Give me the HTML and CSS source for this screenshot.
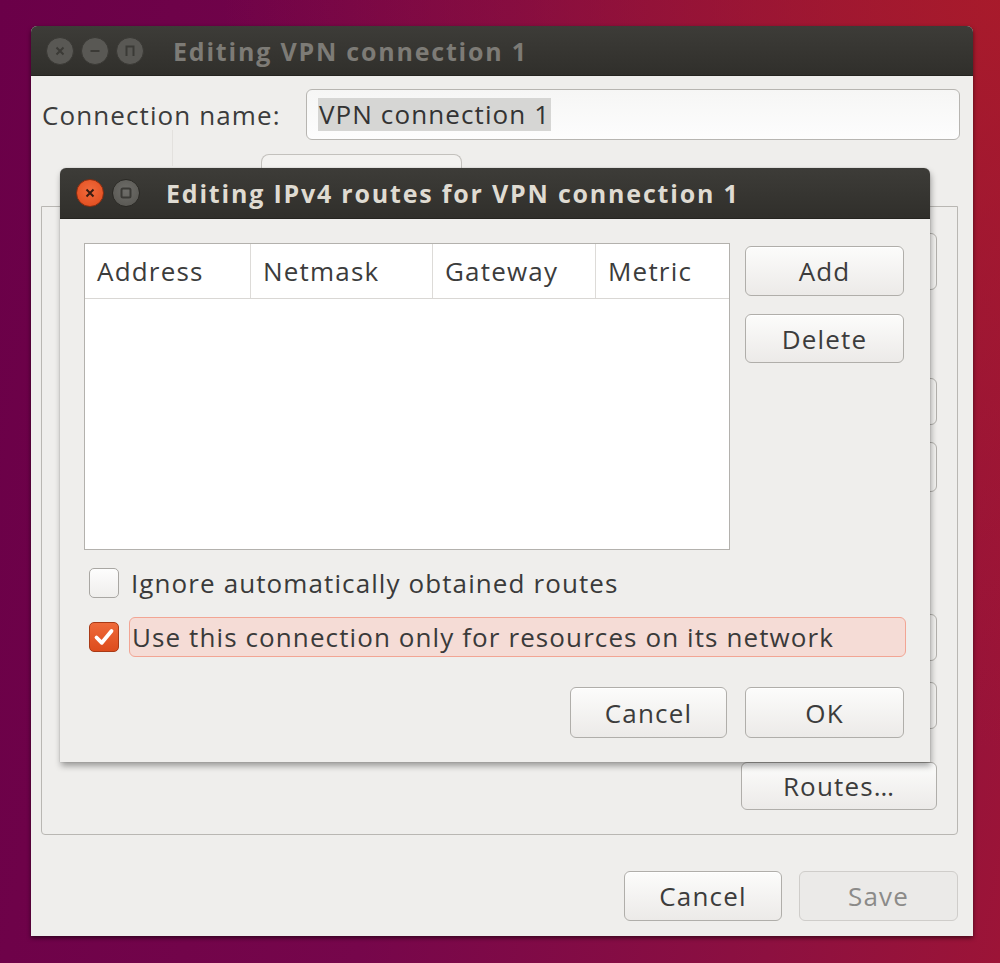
FILE: index.html
```html
<!DOCTYPE html>
<html>
<head>
    <title>Editing VPN connection 1</title>
    <link rel="stylesheet" href="styles.css">
</head>
<body>
    <div class="desktop">
        <!-- Parent window (inactive) -->
        <div class="window main-window">
            <div class="titlebar inactive">
                <div class="wm-buttons">
                    <span class="wm-btn">
                        <svg width="16" height="16" viewBox="0 0 16 16"><path d="M4.5 4.5 L11.5 11.5 M11.5 4.5 L4.5 11.5" stroke="#3b3a36" stroke-width="2"/></svg>
                    </span>
                    <span class="wm-btn">
                        <svg width="16" height="16" viewBox="0 0 16 16"><path d="M3.5 8 H12.5" stroke="#3b3a36" stroke-width="2"/></svg>
                    </span>
                    <span class="wm-btn">
                        <svg width="16" height="16" viewBox="0 0 16 16"><path d="M4.5 13 V3.5 H11.5 V13" fill="none" stroke="#3b3a36" stroke-width="2"/></svg>
                    </span>
                </div>
                <span class="title">Editing VPN connection 1</span>
            </div>
            <div class="window-body">
                <div class="name-row">
                    <label class="field-label">Connection name:</label>
                    <div class="entry"><span class="selection">VPN connection 1</span></div>
                </div>
                <div class="notebook">
                    <div class="tabs">
                        <div class="tab-sep"></div>
                        <div class="tab"></div>
                    </div>
                    <div class="frame">
                        <div class="ghost ghost-1"></div>
                        <div class="ghost ghost-2"></div>
                        <div class="ghost ghost-3"></div>
                        <div class="ghost ghost-4"></div>
                        <div class="ghost ghost-5"></div>
                        <button class="btn routes-btn">Routes…</button>
                    </div>
                </div>
                <div class="actions">
                    <button class="btn main-cancel">Cancel</button>
                    <button class="btn save-btn" disabled>Save</button>
                </div>
            </div>
        </div>

        <!-- Routes dialog (active) -->
        <div class="window dialog">
            <div class="titlebar">
                <div class="wm-buttons">
                    <span class="wm-btn close">
                        <svg width="16" height="16" viewBox="0 0 16 16"><path d="M4.5 4.5 L11.5 11.5 M11.5 4.5 L4.5 11.5" stroke="#3a1c12" stroke-width="2"/></svg>
                    </span>
                    <span class="wm-btn">
                        <svg width="16" height="16" viewBox="0 0 16 16"><rect x="3.5" y="3.5" width="9" height="9" rx="1.5" fill="none" stroke="#3b3a36" stroke-width="2"/></svg>
                    </span>
                </div>
                <span class="title">Editing IPv4 routes for VPN connection 1</span>
            </div>
            <div class="dialog-body">
                <div class="routes-area">
                    <div class="treeview">
                        <div class="tree-header">
                            <div class="col col-address">Address</div>
                            <div class="col col-netmask">Netmask</div>
                            <div class="col col-gateway">Gateway</div>
                            <div class="col col-metric">Metric</div>
                        </div>
                        <div class="tree-rows"></div>
                    </div>
                    <div class="side-buttons">
                        <button class="btn">Add</button>
                        <button class="btn">Delete</button>
                    </div>
                </div>
                <div class="check-row first-check">
                    <span class="checkbox"></span>
                    <span class="check-label">Ignore automatically obtained routes</span>
                </div>
                <div class="check-row">
                    <span class="checkbox checked">
                        <svg width="28" height="28" viewBox="0 0 28 28"><path d="M6.5 14.5 L11.8 19.8 L21.5 8" fill="none" stroke="#fff" stroke-width="3.8" stroke-linecap="round" stroke-linejoin="round"/></svg>
                    </span>
                    <span class="check-label focused">Use this connection only for resources on its network</span>
                </div>
                <div class="dialog-actions">
                    <button class="btn">Cancel</button>
                    <button class="btn">OK</button>
                </div>
            </div>
        </div>
    </div>
</body>
</html>
```

FILE: styles.css
```css
/* Global styles */
* {
    margin: 0;
    padding: 0;
    box-sizing: border-box;
}

body {
    width: 1000px;
    height: 963px;
    overflow: hidden;
    font-family: 'Open Sans', 'DejaVu Sans', sans-serif;
    color: #3c3c3c;
}

.desktop {
    position: relative;
    width: 1000px;
    height: 963px;
    background:
        radial-gradient(ellipse at 100% 0%, rgba(172, 28, 40, 0.85) 0%, rgba(172, 28, 40, 0) 55%),
        linear-gradient(100deg, #6a0048 0%, #76064b 45%, #8d1040 80%, #9c1437 100%);
}

/* Windows */
.window {
    position: absolute;
    display: flex;
    flex-direction: column;
    background-color: #efeeec;
    border-radius: 6px 6px 0 0;
    overflow: hidden;
}

.main-window {
    left: 31px;
    top: 26px;
    width: 942px;
    height: 910px;
    box-shadow: 0 2px 4px rgba(0, 0, 0, 0.55);
}

.dialog {
    left: 60px;
    top: 168px;
    width: 870px;
    height: 594px;
    box-shadow: 1px 4px 6px rgba(0, 0, 0, 0.35), 0 0 1px rgba(0, 0, 0, 0.4);
}

.titlebar {
    height: 50px;
    flex-shrink: 0;
    display: flex;
    align-items: center;
    padding-left: 15px;
    background: linear-gradient(#3d3c38, #302f2b);
    border-bottom: 1px solid #252420;
}

.dialog .titlebar {
    height: 51px;
    padding-left: 16px;
}

.wm-buttons {
    display: flex;
    gap: 7px;
}

.dialog .wm-buttons {
    gap: 8px;
}

.wm-btn {
    width: 28px;
    height: 28px;
    border-radius: 50%;
    background: radial-gradient(circle at 50% 40%, #6e6d69, #55544f);
    border: 1px solid #2a2925;
    display: flex;
    align-items: center;
    justify-content: center;
}

.titlebar.inactive .wm-btn {
    background: #595854;
    border-color: #3a3935;
}

.wm-btn.close {
    background: radial-gradient(circle at 50% 40%, #f26a3c, #de4a1b);
    border-color: #8c2d10;
}

.title {
    margin-left: 26px;
    font-size: 25px;
    font-weight: 700;
    color: #dfdbd2;
    letter-spacing: 1.8px;
}

.titlebar.inactive .title {
    color: #7d7b76;
    margin-left: 29px;
}

/* Buttons */
.btn {
    font-family: inherit;
    font-size: 26px;
    letter-spacing: 1.15px;
    color: #3c3c3c;
    height: 50px;
    width: 159px;
    border: 1px solid #b0aeaa;
    border-radius: 6px;
    background: linear-gradient(#fcfcfb, #eceae8);
    box-shadow: inset 0 1px 0 #fff;
}

.btn:disabled {
    color: #8b8b89;
    background: #ebeae8;
    border-color: #cfcdca;
    box-shadow: none;
}

/* Parent window body */
.window-body {
    flex: 1;
    display: flex;
    flex-direction: column;
    padding: 13px 15px 15px 10px;
}

.name-row {
    display: flex;
    align-items: center;
    height: 51px;
}

.field-label {
    font-size: 26px;
    letter-spacing: 1.1px;
    width: 265px;
    padding-left: 1px;
}

.entry {
    flex: 1;
    height: 51px;
    margin-right: -2px;
    border: 1px solid #b7b5b1;
    border-radius: 6px;
    background: linear-gradient(#f6f6f5, #fdfdfd);
    display: flex;
    align-items: center;
    padding-left: 11px;
}

.selection {
    font-size: 26px;
    letter-spacing: 1.1px;
    color: #333;
    background-color: #d6d6d4;
    padding: 0 1px;
    line-height: 33px;
}

.notebook {
    display: flex;
    flex-direction: column;
    margin-top: 14px;
}

.tabs {
    height: 52px;
    display: flex;
    align-items: flex-end;
}

.tab-sep {
    width: 1px;
    height: 36px;
    background-color: #e3e1de;
    margin-left: 131px;
    align-self: flex-start;
    margin-top: -24px;
}

.tab {
    width: 201px;
    height: 52px;
    margin-left: 88px;
    border: 1px solid #c3c1bd;
    border-bottom: none;
    border-radius: 8px 8px 0 0;
    background-color: #f3f2f0;
}

.frame {
    height: 629px;
    border: 1px solid #b9b7b3;
    border-radius: 0 0 4px 4px;
    display: flex;
    flex-direction: column;
    align-items: flex-end;
    padding: 26px 20px 0 0;
}

.ghost {
    width: 196px;
    border: 1px solid #b3b1ad;
    border-radius: 6px;
    background: #f4f3f1;
}

.ghost-1 { height: 57px; }
.ghost-2 { height: 47px; margin-top: 88px; }
.ghost-3 { height: 50px; margin-top: 17px; }
.ghost-4 { height: 47px; margin-top: 122px; }
.ghost-5 { height: 47px; margin-top: 21px; }

.routes-btn {
    width: 196px;
    height: 48px;
    margin-top: 33px;
}

.actions {
    margin-top: auto;
    display: flex;
    justify-content: flex-end;
    gap: 17px;
}

.main-cancel {
    width: 158px;
}

/* Dialog body */
.dialog-body {
    flex: 1;
    display: flex;
    flex-direction: column;
    padding: 24px 26px 24px 24px;
}

.routes-area {
    display: flex;
    gap: 15px;
    height: 307px;
}

.treeview {
    width: 646px;
    background-color: #fff;
    border: 1px solid #b3b1ad;
    display: flex;
    flex-direction: column;
}

.tree-header {
    display: flex;
    height: 55px;
    border-bottom: 1px solid #d9d7d4;
}

.col {
    font-size: 26px;
    letter-spacing: 1.2px;
    display: flex;
    align-items: center;
    padding-left: 12px;
    border-right: 1px solid #dddbd8;
}

.col-address { width: 166px; }
.col-netmask { width: 182px; }
.col-gateway { width: 163px; }
.col-metric { flex: 1; border-right: none; }

.side-buttons {
    display: flex;
    flex-direction: column;
    gap: 18px;
    padding-top: 3px;
}

.side-buttons .btn {
    height: 50px;
}

.side-buttons .btn + .btn {
    height: 49px;
}

.check-row {
    display: flex;
    align-items: center;
    height: 40px;
    margin-left: 5px;
    margin-top: 14px;
}

.check-row.first-check {
    margin-top: 13px;
}

.checkbox {
    width: 30px;
    height: 30px;
    flex-shrink: 0;
    border: 1px solid #a9a7a3;
    border-radius: 5px;
    background: linear-gradient(#fdfdfd, #efeeec);
    display: flex;
    align-items: center;
    justify-content: center;
}

.checkbox.checked {
    background: linear-gradient(#ee6a3a, #dd4c1d);
    border-color: #a93a16;
}

.check-label {
    font-size: 26px;
    letter-spacing: 1.1px;
    margin-left: 12px;
    color: #3a3a3a;
}

.check-label.focused {
    flex: 1;
    margin-left: 10px;
    height: 40px;
    display: flex;
    align-items: center;
    padding-left: 2px;
    margin-right: -2px;
    background-color: #f5dcd6;
    border: 1px solid #f2a594;
    border-radius: 6px;
}

.dialog-actions {
    margin-top: auto;
    display: flex;
    justify-content: flex-end;
    gap: 18px;
}

.dialog-actions .btn {
    height: 51px;
}

.dialog-actions .btn:first-child {
    width: 157px;
}
```
